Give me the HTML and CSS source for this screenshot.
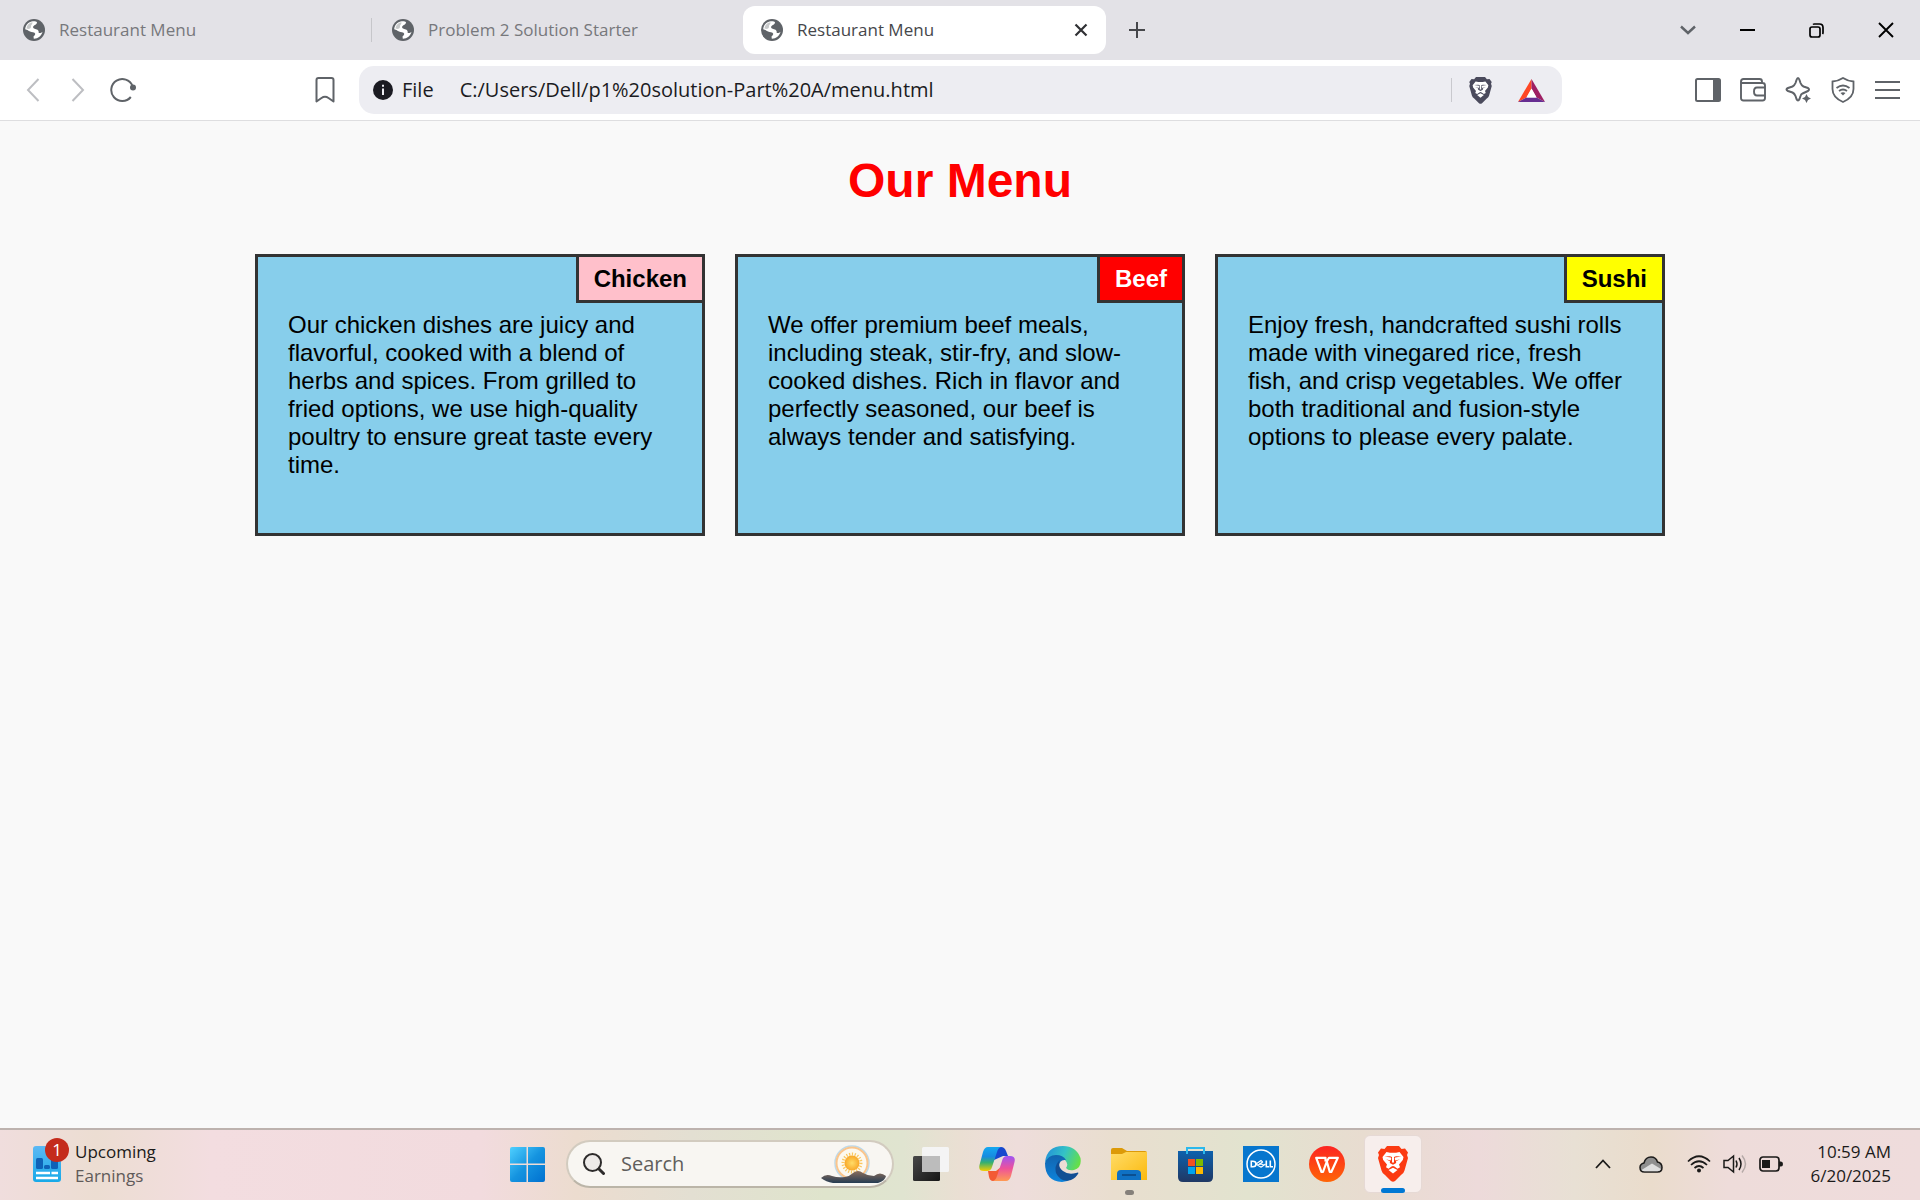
FILE: index.html
```html
<!DOCTYPE html>
<html lang="en">
<head>
<meta charset="utf-8">
<title>Restaurant Menu</title>
<link rel="stylesheet" href="styles.css">
</head>
<body>
<svg class="defs" aria-hidden="true">
  <symbol id="globe" viewBox="0 0 22 22">
    <circle cx="11" cy="11" r="11" fill="#5f6368"/>
    <path class="land" d="M8.500 2.600C11 2 13 2.300 14 3.200C14 5.600 11.200 5.800 10.200 7.600C9.600 9.200 11 10 13 10.200C15.500 10.500 16 12.500 15.600 13.800C17 14.400 18.500 13.800 19.500 12.800C18.500 17 15 19.800 10.800 19.700L10.500 17.500C12 16.200 13 15 11.500 13.800C9.500 12.700 7.500 13.200 5.500 11.700C4 10.500 3 10.400 2.200 10.200C2.500 6.500 5 3.600 8.500 2.600Z"/>
    <path fill="#5f6368" d="M3.500 9.500C6 10.500 8.200 9.500 8 7.500C7.800 5.500 9.800 5.200 9.500 3.200C6.500 3.500 3.800 6 3.500 9.500Z" opacity=".35"/>
  </symbol>
  <symbol id="lion" viewBox="0 0 30 36">
    <path fill="currentColor" d="M9 0H21L23.500 3L27 2.500L30 6.500L29 9L30 12L26.500 24.500Q26 27 23 29L17 35Q15 36.500 13 35L7 29Q4 27 3.500 24.500L0 12L1 9L0 6.500L3 2.500L6.500 3Z"/>
    <path class="lion-face" d="M8.500 6L12 6.800H18L21.500 6L25.500 11L24.800 14L21 18.500L22 21.200L19.500 22.800L16.500 20.500L15 20L13.500 20.500L10.500 22.800L8 21.200L9 18.500L5.200 14L4.500 11Z"/>
    <path class="lion-face" d="M10.500 24L15 21.700L19.500 24L15 27.500Z"/>
    <path fill="currentColor" d="M6.500 10.500L13 11.500L13.300 13L12.500 14.500L8 13.200L12 15.300L11.800 17L15 18.800L18.200 17L18 15.300L22 13.200L17.500 14.500L16.700 13L17 11.500L23.500 10.500L18 10.300L16 11V16.500H14V11L12 10.300Z"/>
  </symbol>
</svg>

<header class="browser">
  <div class="tabstrip">
    <div class="tabs">
      <button class="tab tab-divided"><svg class="favicon"><use href="#globe"/></svg><span>Restaurant Menu</span></button>
      <button class="tab"><svg class="favicon"><use href="#globe"/></svg><span>Problem 2 Solution Starter</span></button>
      <div class="tab tab-active"><svg class="favicon"><use href="#globe"/></svg><span>Restaurant Menu</span>
        <button class="tab-close" aria-label="Close tab"><svg width="14" height="14" viewBox="0 0 14 14"><path d="M1.500 1.500L12.500 12.500M12.500 1.500L1.500 12.500" stroke="#303134" stroke-width="2.200"/></svg></button>
      </div>
      <button class="new-tab" aria-label="New tab"><svg width="16" height="16" viewBox="0 0 16 16"><path d="M8 0V16M0 8H16" stroke="#46474b" stroke-width="2"/></svg></button>
    </div>
    <div class="window-controls">
      <button class="tab-search" aria-label="Search tabs"><svg width="16" height="10" viewBox="0 0 16 10"><path d="M1 1.500L8 8L15 1.500" fill="none" stroke="#5f6368" stroke-width="2.400"/></svg></button>
      <button aria-label="Minimize"><svg width="15" height="15" viewBox="0 0 15 15"><path d="M0 7H15" stroke="#000" stroke-width="2"/></svg></button>
      <button aria-label="Restore"><svg width="15" height="15" viewBox="0 0 15 15" fill="none" stroke="#000" stroke-width="1.700"><rect x="1" y="4" width="10" height="10" rx="2"/><path d="M4 1.500Q4.500 1 5.500 1H10.500Q14 1 14 4.500V9.500Q14 10.500 13.500 11"/></svg></button>
      <button aria-label="Close"><svg width="16" height="16" viewBox="0 0 16 16"><path d="M1 1L15 15M15 1L1 15" stroke="#000" stroke-width="1.900"/></svg></button>
    </div>
  </div>

  <div class="toolbar">
    <div class="nav-buttons">
      <button aria-label="Back"><svg width="14" height="24" viewBox="0 0 14 24" fill="none" stroke="#bdbec2" stroke-width="2"><path d="M12.500 1L2 12L12.500 23"/></svg></button>
      <button aria-label="Forward"><svg width="14" height="24" viewBox="0 0 14 24" fill="none" stroke="#bdbec2" stroke-width="2"><path d="M1.500 1L12 12L1.500 23"/></svg></button>
      <button aria-label="Reload"><svg width="26" height="26" viewBox="0 0 26 26" fill="none" stroke="#5f6368" stroke-width="2"><path d="M20.800 20A11 11 0 1 1 22.500 9"/><circle cx="23" cy="10.500" r="3" fill="#5f6368" stroke="none"/></svg></button>
      <button class="bookmark" aria-label="Bookmark this page"><svg width="20" height="26" viewBox="0 0 20 26" fill="none" stroke="#5f6368" stroke-width="2" stroke-linejoin="round"><path d="M1.500 3Q1.500 1 3.500 1H16.500Q18.500 1 18.500 3V24.500L13.500 21Q10 18.500 6.500 21L1.500 24.500Z"/></svg></button>
    </div>
    <div class="address">
      <button class="site-info"><svg width="20" height="20" viewBox="0 0 20 20"><circle cx="10" cy="10" r="10" fill="#1b1b22"/><path d="M10 8.500V15M10 4.800V6.800" stroke="#ededf2" stroke-width="2"/></svg>File</button>
      <input type="text" class="url" aria-label="Address" value="C:/Users/Dell/p1%20solution-Part%20A/menu.html">
      <button class="shields" aria-label="Brave Shields"><svg class="lion-small"><use href="#lion"/></svg></button>
      <button class="rewards" aria-label="Brave Rewards"><svg width="27" height="23" viewBox="0 0 27 23"><path fill="#ff4724" d="M13.500 0V9.500L8.500 18.500L0 23Z"/><path fill="#9e1f63" d="M13.500 0L27 23L18.500 18.500L13.500 9.500Z"/><path fill="#662d91" d="M0 23L8.500 18.500H18.500L27 23Z"/><path fill="#fff" d="M13.500 9.500L18.500 18.500H8.500Z"/></svg></button>
    </div>
    <div class="nav-actions">
      <button aria-label="Sidebar"><svg width="26" height="24" viewBox="0 0 26 24"><rect x="1" y="1" width="24" height="22" rx="1.500" fill="none" stroke="#5f6368" stroke-width="2"/><path fill="#5f6368" d="M18 1H25V23H18Z"/></svg></button>
      <button aria-label="Wallet"><svg width="26" height="24" viewBox="0 0 26 24" fill="none" stroke="#5f6368" stroke-width="1.900"><path d="M1 3.500Q1 1 3.500 1H19.500Q22 1 22 3.500V5M1 3.500Q1 5 3 5H22.500Q25 5 25 7.500V20Q25 22.500 22.500 22.500H3.500Q1 22.500 1 20Z"/><path d="M25 9.500H17Q14 9.500 14 13.500T17 17.500H25"/></svg></button>
      <button aria-label="Leo AI"><svg width="26" height="26" viewBox="0 0 26 26"><path fill="none" stroke="#5f6368" stroke-width="2" stroke-linejoin="round" d="M17.500 16.500Q16 17 15.500 19L14.500 22Q13 25 11.500 22L10.500 19Q9.500 16.500 7.500 15.500L3 14Q0 12.500 3 11L7.500 9.500Q9.500 8.500 10.500 6L11.500 3Q13 -1 14.500 3L15.500 6Q16.500 8.500 18.500 9.500L23 11Q25 12.500 23 14Z"/><path fill="#5f6368" d="M21.500 17L23 20L26 21.500L23 23L21.500 26L20 23L17 21.500L20 20Z"/></svg></button>
      <button aria-label="VPN"><svg width="24" height="26" viewBox="0 0 24 26" fill="none" stroke="#5f6368" stroke-width="1.800"><path d="M12 1Q16.500 4 22.500 4.500V12Q22.500 20.500 12 25Q1.500 20.500 1.500 12V4.500Q7.500 4 12 1Z"/><path d="M5.500 11Q12 6 18.500 11M8 14Q12 11 16 14"/><path d="M9.500 16Q12 14.500 14.500 16L12 18.500Z" fill="#5f6368" stroke="none"/></svg></button>
      <button aria-label="Main menu"><svg width="25" height="20" viewBox="0 0 25 20"><path d="M0 2H25M0 10H25M0 18H25" stroke="#5f6368" stroke-width="2"/></svg></button>
    </div>
  </div>
</header>

<main class="page">
  <h1>Our Menu</h1>
  <div class="menu">
    <section class="card">
      <h2 class="tag tag-chicken">Chicken</h2>
      <p>Our chicken dishes are juicy and flavorful, cooked with a blend of herbs and spices. From grilled to fried options, we use high-quality poultry to ensure great taste every time.</p>
    </section>
    <section class="card">
      <h2 class="tag tag-beef">Beef</h2>
      <p>We offer premium beef meals, including steak, stir-fry, and slow-cooked dishes. Rich in flavor and perfectly seasoned, our beef is always tender and satisfying.</p>
    </section>
    <section class="card">
      <h2 class="tag tag-sushi">Sushi</h2>
      <p>Enjoy fresh, handcrafted sushi rolls made with vinegared rice, fresh fish, and crisp vegetables. We offer both traditional and fusion-style options to please every palate.</p>
    </section>
  </div>
</main>

<footer class="taskbar">
  <button class="widgets">
    <span class="widget-icon">
      <svg width="28" height="36" viewBox="0 0 28 36"><defs><linearGradient id="wg" x1="0" y1="0" x2="0" y2="1"><stop offset="0" stop-color="#5cb8f4"/><stop offset="1" stop-color="#17a9e8"/></linearGradient></defs><rect width="28" height="36" rx="3" fill="url(#wg)"/><rect x="3" y="12" width="7" height="11" rx="1.500" fill="#0f62b8"/><rect x="11" y="19" width="6" height="4" rx="1.500" fill="#0f62b8"/><rect x="18" y="10" width="7" height="13" rx="1.500" fill="#0f62b8"/><path d="M3 27H17M18.500 27H25M3 32H25" stroke="#fff" stroke-width="2.400"/></svg>
      <span class="badge">1</span>
    </span>
    <span class="widget-text"><span>Upcoming</span><span class="muted">Earnings</span></span>
  </button>

  <nav class="apps">
    <button class="app" aria-label="Start"><svg width="35" height="35" viewBox="0 0 35 35"><defs><linearGradient id="win" x1="0" y1="0" x2="1" y2="1"><stop offset="0" stop-color="#4fd0ff"/><stop offset=".5" stop-color="#1594e0"/><stop offset="1" stop-color="#0070d0"/></linearGradient></defs><path fill="url(#win)" d="M2 0H16.500V16.500H0V2Q0 0 2 0ZM18 0H33Q35 0 35 2V16.500H18ZM0 18H16.500V35H2Q0 35 0 33ZM18 18H35V33Q35 35 33 35H18Z"/></svg></button>
    <label class="search">
      <svg width="22" height="22" viewBox="0 0 22 22"><circle cx="9.500" cy="9.500" r="8.500" fill="#eeebe9" stroke="#2d2b2b" stroke-width="2"/><path d="M16 16L20.500 20.500" stroke="#2d2b2b" stroke-width="3" stroke-linecap="round"/></svg>
      <input type="text" placeholder="Search" aria-label="Search">
      <svg width="65" height="38" viewBox="0 0 65 38"><defs><radialGradient id="sun"><stop offset="0" stop-color="#ffdc68"/><stop offset="1" stop-color="#f8a829"/></radialGradient><linearGradient id="hill" x1="0" y1="0" x2="0" y2="1"><stop offset="0" stop-color="#8b6e5c"/><stop offset="1" stop-color="#253c53"/></linearGradient></defs><circle cx="31" cy="18" r="17" fill="#fdf9ef" stroke="#bcd9ea" stroke-width="1.500"/><circle cx="31" cy="18" r="15.500" fill="none" stroke="#fac58c" stroke-width="2"/><circle cx="31" cy="18" r="9" fill="none" stroke="#fac860" stroke-width="3" stroke-dasharray="1.200 1.600"/><circle cx="31" cy="18" r="7.500" fill="url(#sun)"/><path fill="url(#hill)" d="M0 33Q5 28 11 31Q17 33 24 32Q29 31 32 28Q37 24 42 28Q47 31 53 31Q59 26 65 31Q64 36 57 38H12Q5 37 0 33Z"/></svg>
    </label>
    <button class="app" aria-label="Task View"><svg width="36" height="34" viewBox="0 0 36 34"><defs><linearGradient id="tv" x1="0" y1="0" x2="1" y2="1"><stop offset="0" stop-color="#484848"/><stop offset="1" stop-color="#161616"/></linearGradient></defs><rect y="9" width="27" height="25" rx="1.500" fill="url(#tv)"/><rect x="9" width="27" height="25" rx="1.500" fill="#f4f4f4"/><path fill="#bcbcbc" d="M9 9H27V25H9Z"/></svg></button>
    <button class="app" aria-label="Copilot"><svg width="36" height="34" viewBox="0 0 36 34"><defs><linearGradient id="c1" x1="0" y1="0" x2="0" y2="1"><stop offset="0" stop-color="#15a8f0"/><stop offset=".4" stop-color="#178be0"/><stop offset=".65" stop-color="#38b070"/><stop offset="1" stop-color="#f6cd00"/></linearGradient><linearGradient id="c2" x1="0" y1="0" x2="0" y2="1"><stop offset="0" stop-color="#9e54f3"/><stop offset=".5" stop-color="#ee529a"/><stop offset="1" stop-color="#ff9a52"/></linearGradient></defs><path fill="#1748ce" d="M17 0H22Q25.500 0 27 4L29 9H24L15 13Z"/><path fill="#f35a35" d="M9 24H17L22 20L19 34H14Q11 34 10 30Z"/><path fill="url(#c1)" d="M9 0H22Q19 1 18 5L13 20Q12 24 8 24H5Q-1 24 .5 18L4 5Q5.500 0 9 0Z"/><path fill="url(#c2)" d="M28 9H31Q37 9 35.500 15L32 29Q30.500 34 27 34H14Q17 33 18 29L23 14Q24 9 28 9Z"/></svg></button>
    <button class="app" aria-label="Microsoft Edge"><svg width="36" height="36" viewBox="0 0 36 36"><defs><linearGradient id="e1" x1="0" y1=".3" x2="1" y2=".6"><stop offset="0" stop-color="#2393d8"/><stop offset=".5" stop-color="#34c2c6"/><stop offset="1" stop-color="#67e044"/></linearGradient><linearGradient id="e2" x1="0" y1="0" x2="0" y2="1"><stop offset="0" stop-color="#1264ae"/><stop offset="1" stop-color="#0d84dc"/></linearGradient></defs><path fill="url(#e1)" d="M0 16Q2 0 18 0Q31 0 35.500 12Q37 22 29 24Q23 25 21 22Q24 18 20 14Q13 7 0 16Z"/><path fill="url(#e2)" d="M0 17Q3 9 11 9Q18 9 21 14Q14 13 14 21Q14 31 26 33Q22 36 17 36Q0 35 0 17Z"/><path fill="#114e94" d="M15 14Q9 19 11 27Q16 37 26 34Q31 32 33.500 27Q33 26 31 27Q23 29 18 25Q12 20 15 14Z"/></svg></button>
    <button class="app app-open" aria-label="File Explorer"><svg width="36" height="33" viewBox="0 0 36 33"><defs><linearGradient id="f1" x1="0" y1="0" x2="1" y2="1"><stop offset="0" stop-color="#ffdc68"/><stop offset="1" stop-color="#fbb90d"/></linearGradient></defs><path fill="#dc9a08" d="M0 2Q0 0 2 0H11L16 3H34Q36 3 36 5V12H0Z"/><path fill="url(#f1)" d="M0 6H11L15 4H36V32H0Z"/><path fill="#0f71c4" d="M6 32V26Q6 22 10 22H26Q30 22 30 26V32Z"/><path d="M11 27H25" stroke="#0b4f90" stroke-width="2"/></svg></button>
    <button class="app" aria-label="Microsoft Store"><svg width="35" height="35" viewBox="0 0 35 35"><defs><linearGradient id="s1" x1="0" y1="0" x2="0" y2="1"><stop offset="0" stop-color="#0d61ad"/><stop offset="1" stop-color="#203864"/></linearGradient></defs><path d="M9 7V1H26V7" fill="none" stroke="#2bb8ec" stroke-width="2"/><path fill="url(#s1)" d="M0 4H35V30Q35 35 30 35H5Q0 35 0 30Z"/><path fill="#f25022" d="M10 12H17V19H10Z"/><path fill="#7fba00" d="M18 12H25V19H18Z"/><path fill="#00a4ef" d="M10 20H17V27H10Z"/><path fill="#ffb900" d="M18 20H25V27H18Z"/><path d="M9 4V7M26 4V7" stroke="#2bb8ec" stroke-width="2"/></svg></button>
    <button class="app" aria-label="Dell"><svg width="36" height="36" viewBox="0 0 36 36" fill="none" stroke="#fff"><path fill="#0676ce" stroke="none" d="M0 0H36V36H0Z"/><circle cx="18" cy="18" r="14" stroke-width="1.500"/><path stroke-width="1.600" d="M8.300 15.300V20.700H9.800Q13 20.700 13 18T9.800 15.300ZM23.300 14.500V20.700H26M27.300 14.500V20.700H30"/><path stroke-width="1.200" d="M13 18L18 14.500L19.500 15.700M15 19.200L20 15.800M18 21.300L22.500 18M13 18L18 21.300M16 17.800L20.500 18.500"/></svg></button>
    <button class="app" aria-label="WPS Office"><svg width="36" height="36" viewBox="0 0 36 36"><defs><linearGradient id="w1" x1="0" y1="0" x2="0" y2="1"><stop offset="0" stop-color="#fc2422"/><stop offset="1" stop-color="#ff6507"/></linearGradient></defs><circle cx="18" cy="18" r="18" fill="url(#w1)"/><path fill="none" stroke="#fff" stroke-width="2.200" stroke-linejoin="round" d="M16.500 15.500V11.800H7.200L12.500 26H14L17.800 15.500L20.800 26H22.300L28.800 11.800H20L17.800 15.500"/></svg></button>
    <button class="app app-current" aria-label="Brave"><svg class="lion-large"><use href="#lion"/></svg></button>
  </nav>

  <div class="tray">
    <button aria-label="Show hidden icons"><svg width="16" height="10" viewBox="0 0 16 10"><path d="M1 9L8 1.500L15 9" fill="none" stroke="#1b1a19" stroke-width="1.800"/></svg></button>
    <button aria-label="OneDrive"><svg width="24" height="17" viewBox="0 0 24 17"><path fill="#8f8f8f" stroke="#1b1a19" stroke-width="1.500" d="M5.500 16Q1 16 1 11.500Q1 8 5 7Q6.500 1 12 1Q17 1 18.500 6Q23 7 23 11.500Q23 16 18.500 16Z"/><path fill="#dedede" d="M2.500 14L13 7.500L22 13Q21 15.200 18.500 15.200H5.500Q3.500 15.200 2.500 14Z"/></svg></button>
    <button class="quick" aria-label="Network, volume and battery">
      <svg width="24" height="18" viewBox="0 0 24 18" fill="none" stroke="#1b1a19" stroke-width="1.700"><path d="M1 6.500Q12 -4 23 6.500M4 10Q12 2.500 20 10M7.500 13Q12 9 16.500 13"/><circle cx="12" cy="15.500" r="2" fill="#1b1a19" stroke="none"/></svg>
      <svg width="24" height="20" viewBox="0 0 24 20" fill="none" stroke="#1b1a19" stroke-width="1.500"><path d="M1 6.500H5L10.500 2V18L5 13.500H1Z"/><path d="M13 6.500Q15 10 13 13.500M16 4Q20 10 16 16"/><path d="M19 1.500Q26 10 19 18.500" stroke="#b5a9a7"/></svg>
      <svg width="24" height="16" viewBox="0 0 24 16"><rect x="1" y="1" width="19" height="14" rx="3" fill="none" stroke="#1b1a19" stroke-width="1.700"/><path fill="#1b1a19" d="M3 4H11V12H3ZM20 5.500H22Q24 5.500 24 8T22 10.500H20Z"/></svg>
    </button>
    <button class="clock"><span>10:59 AM</span><span>6/20/2025</span></button>
  </div>
</footer>
</body>
</html>
```

FILE: styles.css
```css
* {
  box-sizing: border-box;
}

body {
  margin: 0;
  min-height: 100vh;
  display: flex;
  flex-direction: column;
  background: #f9f9f9;
  font-family: "Liberation Sans", Arial, sans-serif;
  font-size: 24px;
  line-height: 28px;
  color: #000;
}

button,
input {
  margin: 0;
  padding: 0;
  border: 0;
  background: none;
  color: inherit;
  font: inherit;
  outline: none;
}

svg {
  flex: none;
  display: block;
}

.defs {
  position: absolute;
  width: 0;
  height: 0;
}

.land,
.lion-face {
  fill: #fff;
}

/* Browser chrome */
.browser,
.taskbar {
  font-family: "Open Sans", "Noto Sans", sans-serif;
  font-size: 17px;
  line-height: 24px;
}

.tabstrip {
  display: flex;
  justify-content: space-between;
  height: 60px;
  background: #e3e2e7;
}

.tabs {
  display: flex;
  flex: 0 1 1200px;
  min-width: 0;
  align-items: center;
  gap: 6px;
  padding-left: 5px;
}

.tab {
  position: relative;
  display: flex;
  flex: 0 1 363px;
  min-width: 0;
  align-items: center;
  gap: 14px;
  height: 48px;
  padding: 0 18px;
  border-radius: 12px;
  color: #77787c;
  text-align: left;
  white-space: nowrap;
}

.tab-divided::after {
  content: "";
  position: absolute;
  right: -4px;
  width: 1px;
  height: 24px;
  background: #c6c6ca;
}

.tab-active {
  background: #fff;
  color: #46474b;
}

.favicon {
  width: 22px;
  height: 22px;
}

.tab-close {
  margin-left: auto;
}

.new-tab {
  display: flex;
  justify-content: center;
  width: 50px;
}

.window-controls {
  display: flex;
}

.window-controls button {
  display: flex;
  align-items: center;
  justify-content: center;
  width: 69px;
}

.window-controls .tab-search {
  width: 50px;
}

.toolbar {
  display: flex;
  align-items: center;
  height: 61px;
  padding: 0 10px;
  background: #fff;
  border-bottom: 1px solid #dedee0;
}

.nav-buttons {
  display: flex;
  flex: 0 0 337px;
}

.nav-buttons button,
.nav-actions button {
  display: flex;
  align-items: center;
  justify-content: center;
  width: 45px;
  height: 45px;
}

.nav-buttons .bookmark {
  margin-left: auto;
}

.nav-actions {
  display: flex;
}

.address {
  display: flex;
  flex: 1;
  min-width: 0;
  align-items: center;
  height: 48px;
  margin: 0 123px 0 12px;
  padding: 0 17px 0 14px;
  border-radius: 15px;
  background: #ededf2;
  color: #1b1b22;
  font-size: 20px;
}

.site-info {
  display: flex;
  align-items: center;
  gap: 9px;
  margin-right: 26px;
}

.url {
  flex: 1;
  min-width: 0;
}

.shields {
  display: flex;
  align-items: center;
  height: 24px;
  padding: 0 26px 0 17px;
  border-left: 1px solid #c9c9ce;
}

.lion-small {
  width: 23px;
  height: 27px;
  color: #4a4a5c;
}

/* Menu page */
.page {
  flex: 1;
  padding: 32px 30px;
}

h1 {
  margin: 0 0 45px;
  color: #f00;
  font-size: 48px;
  line-height: 56px;
  text-align: center;
}

.menu {
  display: grid;
  grid-template-columns: repeat(3, 1fr);
  gap: 30px;
  max-width: 1410px;
  margin: 0 auto;
}

.card {
  position: relative;
  padding: 30px;
  border: 3px solid #333;
  background: #87ceeb;
}

.card p {
  margin: 24px 0;
}

.tag {
  position: absolute;
  top: 0;
  right: 0;
  margin: 0;
  padding: 8px 15px 7px;
  border: solid #333;
  border-width: 0 0 3px 3px;
  font-size: 24px;
}

.tag-chicken {
  background: #ffc0cb;
}

.tag-beef {
  background: #f00;
  color: #fff;
}

.tag-sushi {
  background: #ff0;
}

/* Taskbar */
.taskbar {
  display: grid;
  grid-template-columns: 1fr auto 1fr;
  align-items: center;
  height: 72px;
  padding-bottom: 2px;
  border-top: 2px solid #bdb2ae;
  background: linear-gradient(90deg, #f0dddd 0, #ecddd2 5%, #f3dde0 11%, #f2dbde 25%, #ecdccf 30%, #e3dfd2 36%, #dfe4cc 43%, #e0e4d0 47%, #eadfd3 50%, #eedddb 53%, #e9decf 58%, #e2e3cf 65%, #e8dcd0 71%, #eddada 77%, #e8e0d4 82%, #eadccc 86%, #eedcda 90%, #efdcdc 100%);
  color: #1b1a19;
}

.widgets {
  display: flex;
  align-items: center;
  justify-self: start;
  gap: 14px;
  padding-left: 33px;
}

.widget-icon {
  position: relative;
}

.badge {
  position: absolute;
  top: -8px;
  left: 12px;
  width: 24px;
  height: 24px;
  border-radius: 50%;
  background: #c42b1c;
  color: #fff;
}

.widget-text,
.clock {
  display: flex;
  flex-direction: column;
  text-align: left;
}

.muted {
  color: #605a59;
}

.apps {
  display: flex;
  align-items: center;
}

.app {
  position: relative;
  display: flex;
  align-items: center;
  justify-content: center;
  width: 66px;
  height: 58px;
}

.search {
  display: flex;
  align-items: center;
  gap: 16px;
  width: 328px;
  height: 48px;
  margin: 0 4px 0 6px;
  padding: 0 6px 0 15px;
  border: 2px solid #d2cbbf;
  border-bottom-color: #bbb5a8;
  border-radius: 24px;
  background: #f8f6f2;
  font-size: 20px;
}

.search input {
  flex: 1;
  min-width: 0;
}

.search input::placeholder {
  color: #605e5c;
  opacity: 1;
}

.app-open::after,
.app-current::after {
  content: "";
  position: absolute;
  bottom: -2px;
  width: 9px;
  height: 5px;
  border-radius: 3px;
  background: #85807a;
}

.app-current {
  width: 58px;
  margin: 0 4px;
  border: 1px solid #e6d9d5;
  border-radius: 6px;
  background: #f7eeec;
}

.app-current::after {
  bottom: -1px;
  width: 24px;
  background: #0078d4;
}

.lion-large {
  width: 30px;
  height: 36px;
  color: #fb3a12;
}

.tray {
  display: flex;
  align-items: center;
  justify-self: end;
  gap: 28px;
  padding-right: 29px;
}

.quick {
  display: flex;
  align-items: center;
  gap: 12px;
  margin-left: -4px;
}

.clock {
  margin-left: -1px;
  text-align: right;
}
```
